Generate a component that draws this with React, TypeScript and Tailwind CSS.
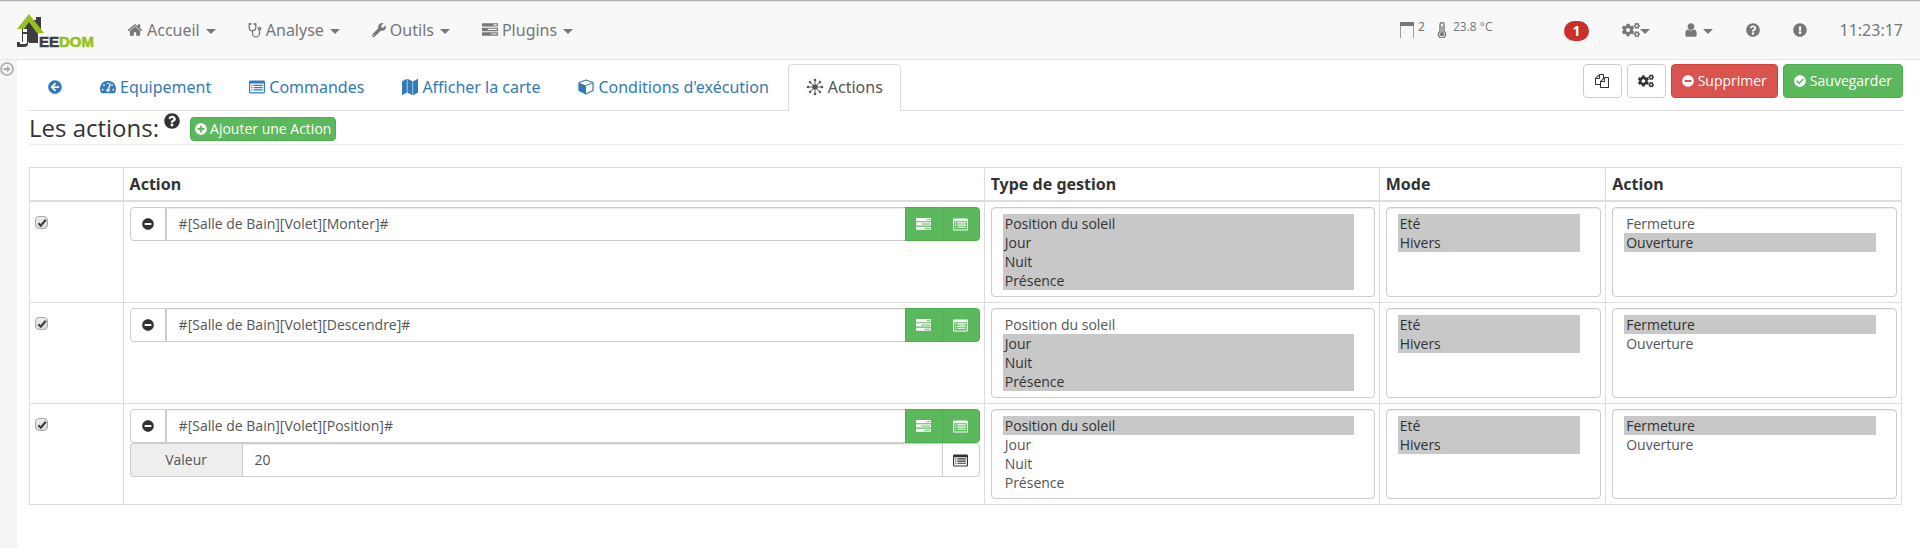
import React from "react";
import {
  FaArrowCircleLeft,
  FaCheckCircle,
  FaCogs,
  FaExclamationCircle,
  FaMinusCircle,
  FaPlusCircle,
  FaQuestionCircle,
  FaTachometerAlt,
  FaWrench,
} from "react-icons/fa";

function Glyph({ d, className = "size-4" }: { d: string; className?: string }) {
  return (
    <svg viewBox="0 0 1792 1792" fill="currentColor" aria-hidden="true" className={`shrink-0 ${className}`}>
      <path d={d} />
    </svg>
  );
}

const HOME =
  "M1472 992v480q0 26-19 45t-45 19h-384v-384h-256v384h-384q-26 0-45-19t-19-45v-480q0-1 .5-3t.5-3l575-474 575 474q1 2 1 6zm223-69l-62 74q-8 9-21 11h-3q-13 0-21-7l-692-577-692 577q-12 8-24 7-13-2-21-11l-62-74q-8-10-7-23.5t11-21.5l719-599q32-26 76-26t76 26l244 204v-195q0-14 9-23t23-9h192q14 0 23 9t9 23v408l219 182q10 8 11 21.5t-7 23.5z";
const TASKS =
  "M1024 1408h640v-128h-640v128zm-384-512h1024v-128h-1024v128zm640-512h384v-128h-384v128zm512 832v256q0 26-19 45t-45 19h-1664q-26 0-45-19t-19-45v-256q0-26 19-45t45-19h1664q26 0 45 19t19 45zm0-512v256q0 26-19 45t-45 19h-1664q-26 0-45-19t-19-45v-256q0-26 19-45t45-19h1664q26 0 45 19t19 45zm0-512v256q0 26-19 45t-45 19h-1664q-26 0-45-19t-19-45v-256q0-26 19-45t45-19h1664q26 0 45 19t19 45z";
const USER =
  "M1536 1399q0 109-62.5 187t-150.5 78h-854q-88 0-150.5-78t-62.5-187q0-85 8.5-160.5t31.5-152 58.5-131 94-89 134.5-34.5q131 128 313 128t313-128q76 0 134.5 34.5t94 89 58.5 131 31.5 152 8.5 160.5zm-256-887q0 159-112.5 271.5t-271.5 112.5-271.5-112.5-112.5-271.5 112.5-271.5 271.5-112.5 271.5 112.5 112.5 271.5z";
const FILES =
  "M1696 384q40 0 68 28t28 68v1216q0 40-28 68t-68 28h-960q-40 0-68-28t-28-68v-288h-544q-40 0-68-28t-28-68v-672q0-40 20-88t48-76l408-408q28-28 76-48t88-20h416q40 0 68 28t28 68v328q68-40 128-40h416zm-544 213l-299 299h299v-299zm-640-384l-299 299h299v-299zm196 647l316-316v-416h-384v416q0 40-28 68t-68 28h-416v640h512v-256q0-40 20-88t48-76zm956 804v-1152h-384v416q0 40-28 68t-68 28h-416v640h896z";
const MAP =
  "M512 0q13 0 22.5 9.5t9.5 22.5v1472q0 20-17 28l-480 256q-7 4-15 4-13 0-22.5-9.5t-9.5-22.5v-1472q0-20 17-28l480-256q7-4 15-4zm1248 0q13 0 22.5 9.5t9.5 22.5v1472q0 20-17 28l-480 256q-7 4-15 4-13 0-22.5-9.5t-9.5-22.5v-1472q0-20 17-28l480-256q7-4 15-4zm-1120 0q8 0 14 3l512 256q18 10 18 29v1472q0 13-9.5 22.5t-22.5 9.5q-8 0-14-3l-512-256q-18-10-18-29v-1472q0-13 9.5-22.5t22.5-9.5z";

function Caret({ className = "" }: { className?: string }) {
  return (
    <svg viewBox="0 0 10 5" fill="currentColor" aria-hidden="true" className={`mt-0.5 h-[5px] w-2.5 shrink-0 ${className}`}>
      <path d="M0 0h10L5 5z" />
    </svg>
  );
}

function ListAlt({ className = "size-4" }: { className?: string }) {
  return (
    <svg viewBox="0 0 16 16" fill="currentColor" aria-hidden="true" className={`shrink-0 ${className}`}>
      <path
        fillRule="evenodd"
        d="M1.400 1.500h13.200A1.400 1.400 0 0 1 16 2.900v10.200a1.400 1.400 0 0 1-1.400 1.400H1.400A1.400 1.400 0 0 1 0 13.100V2.900A1.400 1.400 0 0 1 1.400 1.500zM1.200 4.600v8.400c0 .2.1.3.3.3h13c.2 0 .3-.1.3-.3V4.600z"
      />
      <path d="M2.300 5.700h1.200v1.200H2.300zM2.300 8h1.200v1.200H2.300zM2.300 10.300h1.200v1.200H2.300zM4.600 5.700h9.100v1.200H4.600zM4.600 8h9.100v1.200H4.600zM4.600 10.300h9.100v1.200H4.600z" />
    </svg>
  );
}

function Stethoscope() {
  return (
    <svg viewBox="0 0 14 16" fill="none" stroke="currentColor" strokeWidth="1.300" aria-hidden="true" className="h-4 w-3.5 shrink-0">
      <path d="M2.600 1.900H1.200v3.600a3.300 3.300 0 0 0 6.600 0V1.900H6.400M4.500 9v2.400a3.500 3.500 0 0 0 7 0V8" />
      <circle cx="11.500" cy="6.600" r="1.300" />
      <path strokeWidth="2" strokeLinecap="round" d="M2.400 1.900h.2M6.400 1.900h.2" />
    </svg>
  );
}

function Cube() {
  return (
    <svg viewBox="0 0 16 16" aria-hidden="true" className="size-4 shrink-0">
      <path d="M8 1l7 2.500v8L8 15l-7-3.500v-8z" fill="none" stroke="currentColor" strokeWidth="1.200" strokeLinejoin="round" />
      <path d="M1 3.700l7 2.700V15l-7-3.500z" fill="currentColor" />
      <path d="M8 6.300l7-2.600" stroke="currentColor" strokeWidth="1" />
    </svg>
  );
}

function Sun() {
  const angles = [0, 45, 90, 135, 180, 225, 270, 315];
  return (
    <svg viewBox="0 0 18 18" fill="currentColor" stroke="currentColor" aria-hidden="true" className="size-[18px] shrink-0">
      <circle cx="9" cy="9" r="2.800" stroke="none" />
      {angles.map((a) => (
        <g key={a} transform={`rotate(${a} 9 9)`}>
          <path d="M9 6V2" strokeWidth=".9" />
          <circle cx="9" cy="2" r="1.300" stroke="none" />
        </g>
      ))}
    </svg>
  );
}

function ArrowOutline() {
  return (
    <svg viewBox="0 0 14 14" fill="none" stroke="currentColor" aria-hidden="true" className="size-3.5">
      <circle cx="7" cy="7" r="6" strokeWidth="1.700" />
      <path d="M3.500 6.100h3.500V3.800L10.500 7 7 10.200V7.900H3.500z" stroke="none" fill="currentColor" />
    </svg>
  );
}

function Shutter() {
  return (
    <svg viewBox="0 0 14 16" fill="currentColor" aria-hidden="true" className="h-4 w-3.5">
      <path d="M0 0h14v4H0z" />
      <path d="M0 4h1v12H0zM13 4h1v12h-1z" opacity=".7" />
    </svg>
  );
}

function Thermometer() {
  return (
    <svg viewBox="0 0 10 16" fill="none" stroke="currentColor" aria-hidden="true" className="h-4 w-2.5">
      <path d="M3 9.300V2.600a2 2 0 0 1 4 0v6.700a3.600 3.600 0 1 1-4 0z" strokeWidth="1.400" />
      <circle cx="5" cy="12.200" r="2.100" fill="currentColor" stroke="none" />
      <path d="M5 12V4" strokeWidth="1.200" />
    </svg>
  );
}

function Logo() {
  return (
    <svg viewBox="0 0 78 36" role="img" aria-label="Jeedom" className="h-9 w-[78px]">
      <path d="M19 4h5v12h-3v14h-9v-1H5V15l7-8h7z" fill="#3f3d42" />
      <path d="M0 16L12 1l15 19h-7l-8-11-5 7z" fill="#94c11f" />
      <path d="M6 16h4v3H6zM6 21h4v8q0 2-3 2H5l1-2z" fill="#fff" />
      <path d="M0 29h3v2h4q3 0 3-2V19h1v12q0 3-4 3H0z" fill="#3f3d42" />
      <text x="22" y="34" fontSize="15" fontWeight="700" fontFamily="Liberation Sans, Arial, sans-serif" fill="#3f3d42" stroke="#3f3d42" strokeWidth=".6">
        EE<tspan fill="#94c11f" stroke="#94c11f">DOM</tspan>
      </text>
    </svg>
  );
}

const MENU = [
  { label: "Accueil", icon: <Glyph d={HOME} /> },
  { label: "Analyse", icon: <Stethoscope /> },
  { label: "Outils", icon: <FaWrench className="size-3.5" /> },
  { label: "Plugins", icon: <Glyph d={TASKS} /> },
];

function Header({ time }: { time: string }) {
  return (
    <header className="flex h-[60px] items-center justify-between border-t border-b border-t-[#b4b4b4] border-b-[#e7e7e7] bg-[#f8f8f8] px-[17px] text-[#777] shadow-[inset_0_1px_0_#e0e0e0]">
      <div className="flex items-center">
        <a href="#accueil" className="mr-4 pt-0.5">
          <Logo />
        </a>
        <nav className="flex items-center">
          {MENU.map((m) => (
            <button key={m.label} type="button" className="flex items-center px-4">
              {m.icon}
              <span className="ml-1">{m.label}</span>
              <Caret className="ml-1.5" />
            </button>
          ))}
        </nav>
      </div>
      <div className="flex items-center">
        <div className="mr-[72px] flex items-start text-xs leading-[10px]">
          <Shutter />
          <span className="ml-1">2</span>
          <span className="ml-3">
            <Thermometer />
          </span>
          <span className="ml-1.5 font-['Open_Sans','Noto_Sans',sans-serif]">23.8 °C</span>
        </div>
        <span className="mt-0.5 mr-[33px] rounded-full bg-[#c9302c] px-2 text-sm leading-5 font-bold text-white">1</span>
        <button type="button" aria-label="Réglages" className="mr-[33px] flex items-center">
          <FaCogs className="size-[18px]" />
          <Caret />
        </button>
        <button type="button" aria-label="Utilisateur" className="mr-[33px] flex items-center gap-1">
          <Glyph d={USER} />
          <Caret />
        </button>
        <button type="button" aria-label="Aide" className="mr-[33px]">
          <FaQuestionCircle className="size-3.5" />
        </button>
        <button type="button" aria-label="Signaler" className="mr-[33px]">
          <FaExclamationCircle className="size-3.5" />
        </button>
        <time>{time}</time>
      </div>
    </header>
  );
}

const TABS = [
  { label: "Equipement", icon: <FaTachometerAlt className="size-4" /> },
  { label: "Commandes", icon: <ListAlt /> },
  { label: "Afficher la carte", icon: <Glyph d={MAP} /> },
  { label: "Conditions d'exécution", icon: <Cube /> },
];

function Tabs() {
  return (
    <div className="flex items-start justify-between border-b border-[#ddd]">
      <nav className="-mb-px flex pt-1 text-[#337ab7]">
        <a href="#retour" aria-label="Retour" className="flex h-[47px] items-center px-[19px] pb-0.5">
          <FaArrowCircleLeft className="size-3.5" />
        </a>
        {TABS.map((t) => (
          <a key={t.label} href={`#${t.label}`} className="flex h-[47px] items-center gap-1 px-[19px] pb-0.5">
            {t.icon}
            {t.label}
          </a>
        ))}
        <a href="#actions" className="flex h-[47px] items-center gap-1 rounded-t border border-b-0 border-[#ddd] bg-white px-[17px] pb-0.5 text-[#555]">
          <Sun />
          Actions
        </a>
      </nav>
      <div className="flex gap-[5px] pt-1 font-['Open_Sans','Noto_Sans',sans-serif] text-sm">
        <button type="button" aria-label="Dupliquer" className="flex h-[34px] w-[39px] items-center justify-center rounded border border-[#ccc] bg-white text-[#333]">
          <Glyph d={FILES} className="size-3.5" />
        </button>
        <button type="button" aria-label="Configuration" className="flex h-[34px] w-[39px] items-center justify-center rounded border border-[#ccc] bg-white text-[#333]">
          <FaCogs className="size-4" />
        </button>
        <button type="button" className="flex h-[34px] items-center gap-1 rounded border border-[#d43f3a] bg-[#d9534f] px-2.5 text-white">
          <FaMinusCircle className="size-3" />
          Supprimer
        </button>
        <button type="button" className="flex h-[34px] items-center gap-1 rounded border border-[#4cae4c] bg-[#5cb85c] px-2.5 text-white">
          <FaCheckCircle className="size-3" />
          Sauvegarder
        </button>
      </div>
    </div>
  );
}

function MultiSelect({ label, options, selected }: { label: string; options: string[]; selected: string[] }) {
  return (
    <select
      multiple
      aria-label={label}
      defaultValue={selected}
      className="block h-[90px] w-full overflow-hidden rounded border border-[#ccc] bg-white py-1.5 pr-5 pl-[11px] font-['Open_Sans','Noto_Sans',sans-serif] text-sm text-[#555] shadow-[inset_0_1px_1px_rgba(0,0,0,0.075)]"
    >
      {options.map((o) => (
        <option
          key={o}
          className="px-0.5 py-0 checked:bg-linear-to-b checked:from-[#c8c8c8] checked:to-[#c8c8c8] checked:[-webkit-text-fill-color:#323232]"
        >
          {o}
        </option>
      ))}
    </select>
  );
}

const TYPES = ["Position du soleil", "Jour", "Nuit", "Présence"];
const MODES = ["Eté", "Hivers"];
const ACTIONS = ["Fermeture", "Ouverture"];

const ROWS = [
  { command: "#[Salle de Bain][Volet][Monter]#", types: TYPES, action: "Ouverture" },
  { command: "#[Salle de Bain][Volet][Descendre]#", types: TYPES.slice(1), action: "Fermeture" },
  { command: "#[Salle de Bain][Volet][Position]#", types: TYPES.slice(0, 1), action: "Fermeture", value: "20" },
];

function CommandField({ command, value }: { command: string; value?: string }) {
  return (
    <div className="font-['Open_Sans','Noto_Sans',sans-serif] text-sm text-[#555]">
      <div className="flex h-[34px]">
        <button type="button" aria-label="Retirer" className="flex w-9 items-center justify-center rounded-l border border-[#ccc] text-[#333]">
          <FaMinusCircle className="size-3" />
        </button>
        <input
          aria-label="Commande"
          defaultValue={command}
          className="min-w-0 flex-1 border border-r-0 border-[#ccc] px-3 shadow-[inset_0_1px_1px_rgba(0,0,0,0.075)]"
        />
        <button type="button" aria-label="Choisir une action" className="flex w-[38px] items-center justify-center border border-[#4cae4c] bg-[#5cb85c] text-white">
          <Glyph d={TASKS} className="size-[15px]" />
        </button>
        <button type="button" aria-label="Choisir une commande" className="-ml-px flex w-[38px] items-center justify-center rounded-r border border-[#4cae4c] bg-[#5cb85c] text-white">
          <ListAlt className="size-[15px]" />
        </button>
      </div>
      {value && (
        <div className="flex h-[34px]">
          <label htmlFor="valeur" className="flex w-[112px] items-center justify-center rounded-l border border-r-0 border-[#ccc] bg-[#eee]">
            Valeur
          </label>
          <input
            id="valeur"
            defaultValue={value}
            className="min-w-0 flex-1 border border-[#ccc] px-3 shadow-[inset_0_1px_1px_rgba(0,0,0,0.075)]"
          />
          <button type="button" aria-label="Choisir une valeur" className="-ml-px flex w-[38px] items-center justify-center rounded-r border border-[#ccc] text-[#333]">
            <ListAlt className="size-[15px]" />
          </button>
        </div>
      )}
    </div>
  );
}

function Checkbox({ label }: { label: string }) {
  return (
    <span className="mt-[9px] grid size-[13px] place-items-center">
      <input
        type="checkbox"
        defaultChecked
        aria-label={label}
        className="peer col-start-1 row-start-1 size-[13px] appearance-none rounded-sm border border-[#a8a8a8] bg-linear-to-b from-[#ededed] to-[#dcdcdc]"
      />
      <svg
        viewBox="0 0 10 10"
        fill="none"
        stroke="#404040"
        strokeWidth="2.200"
        aria-hidden="true"
        className="pointer-events-none invisible col-start-1 row-start-1 size-2.5 peer-checked:visible"
      >
        <path d="M1.400 5.200l2.400 2.500L8.800 1.800" />
      </svg>
    </span>
  );
}

function ActionsTable() {
  return (
    <div className="pr-px">
      <table className="mt-[22px] w-full table-fixed border-collapse border border-[#ddd]">
        <colgroup>
          <col className="w-[5%]" />
          <col className="w-[46%]" />
          <col className="w-[21.1%]" />
          <col className="w-[12.1%]" />
          <col />
        </colgroup>
        <thead>
          <tr className="text-left">
            {["", "Action", "Type de gestion", "Mode", "Action"].map((h, i) => (
              <th key={i} className="h-[33px] border border-b-2 border-[#ddd] px-1.5 py-1 leading-6 font-bold">
                {h}
              </th>
            ))}
          </tr>
        </thead>
        <tbody>
          {ROWS.map((r) => (
            <tr key={r.command} className="align-top">
              <td className="border border-[#ddd] p-[5px]">
                <Checkbox label={`Activer ${r.command}`} />
              </td>
              <td className="border border-[#ddd] py-[5px] pr-1 pl-1.5">
                <CommandField command={r.command} value={r.value} />
              </td>
              <td className="border border-[#ddd] py-[5px] pr-1 pl-1.5">
                <MultiSelect label="Type de gestion" options={TYPES} selected={r.types} />
              </td>
              <td className="border border-[#ddd] py-[5px] pr-1 pl-1.5">
                <MultiSelect label="Mode" options={MODES} selected={MODES} />
              </td>
              <td className="border border-[#ddd] py-[5px] pr-1 pl-1.5">
                <MultiSelect label="Action" options={ACTIONS} selected={[r.action]} />
              </td>
            </tr>
          ))}
        </tbody>
      </table>
    </div>
  );
}

export default function App() {
  return (
    <div className="flex min-h-screen flex-col bg-white font-['Noto_Sans','Open_Sans',sans-serif] text-base text-[#333]">
      <Header time="11:23:17" />
      <div className="flex flex-1">
        <aside className="w-[17px] shrink-0 bg-[#f5f5f5] pt-0.5 text-[#aaa]">
          <button type="button" aria-label="Ouvrir le menu" className="block">
            <ArrowOutline />
          </button>
        </aside>
        <main className="min-w-0 flex-1 pr-[17px] pl-3">
          <Tabs />
          <div className="flex h-[34px] items-center border-b border-[#eee] font-['Open_Sans','Noto_Sans',sans-serif]">
            <h1 className="text-2xl leading-6">Les actions:</h1>
            <FaQuestionCircle className="mb-3.5 ml-[5px] size-4" />
            <button type="button" className="mt-0.5 ml-2.5 flex h-6 items-center gap-[3px] rounded-sm border border-[#4cae4c] bg-[#5cb85c] px-1 text-sm text-white">
              <FaPlusCircle className="size-3" />
              Ajouter une Action
            </button>
          </div>
          <ActionsTable />
        </main>
      </div>
    </div>
  );
}
